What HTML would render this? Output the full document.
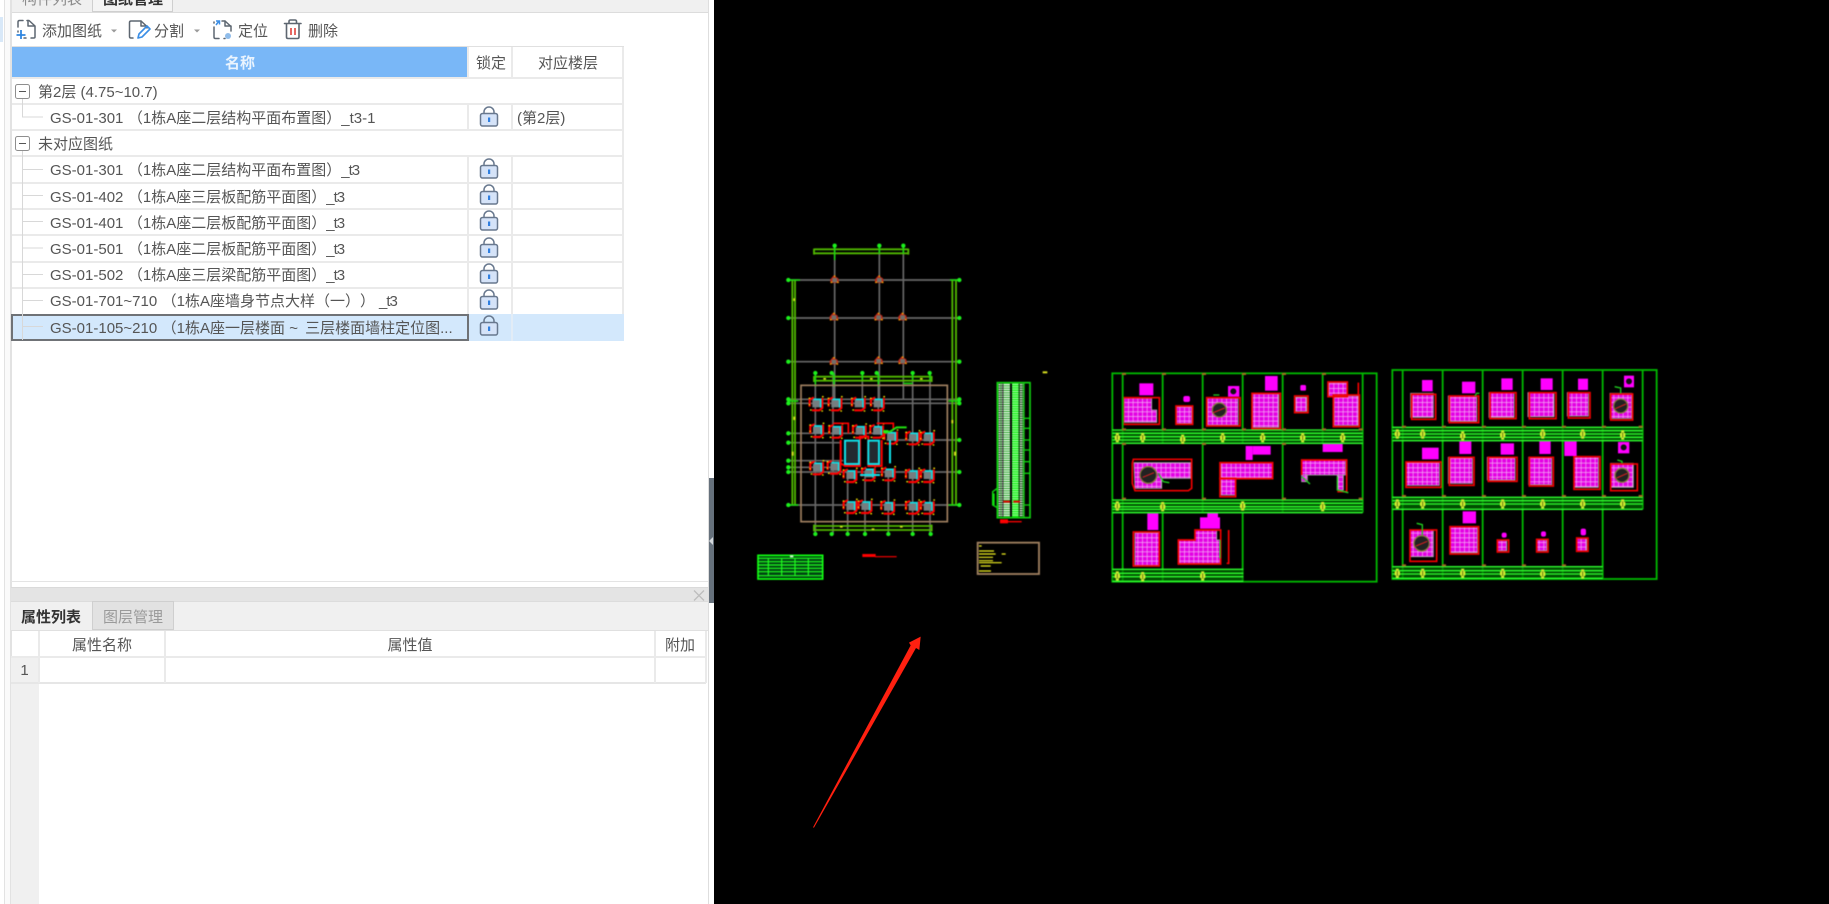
<!DOCTYPE html>
<html lang="zh"><head><meta charset="utf-8"><title>图纸管理</title>
<style>
html,body{margin:0;padding:0;width:1829px;height:904px;overflow:hidden;background:#fff}
body{position:relative;font-family:"Liberation Sans","Noto Sans CJK SC",sans-serif;font-size:15px;color:#555;text-spacing-trim:space-all}
.a{position:absolute}
.t{position:absolute;white-space:nowrap;line-height:20px;height:20px;filter:blur(.25px)}
.c{transform:translateX(-50%)}
.o{margin-left:4.5px}
.u{letter-spacing:-1px}
svg{position:absolute;left:0;top:0}
.r rect,.r path{fill:none;stroke:#f00000;stroke-width:5}
.p rect,.p path{fill:url(#gm);stroke:#b0a8b0;stroke-width:2.500}
.k rect{fill:#ff00ff}
</style></head><body>
<div class="a" style="left:0;top:17px;width:3px;height:25px;background:#d8e8f8"></div>
<div class="a" style="left:4px;top:0;width:1px;height:904px;background:#e2e2e2"></div>
<div class="a" style="left:5px;top:0;width:6px;height:904px;background:#fafafa"></div>
<div class="a" style="left:10px;top:0;width:2px;height:904px;background:#e2e2e2"></div>

<!-- top tabs -->
<div class="a" style="left:12px;top:0;width:697px;height:12px;background:#f0f0f0;border-bottom:1px solid #dcdcdc"></div>
<div class="a" style="left:92px;top:0;width:81px;height:12px;background:#f4f4f4;border:1px solid #cfcfcf;border-top:0;box-sizing:border-box"></div>
<div class="t" style="left:22px;top:-10px;color:#8c8c8c">构件列表</div>
<div class="t" style="left:103px;top:-10px;color:#333;font-weight:bold">图纸管理</div>

<!-- toolbar -->
<div class="t" style="left:42px;top:22px">添加图纸</div>
<div class="t" style="left:154px;top:22px">分割</div>
<div class="t" style="left:238px;top:22px">定位</div>
<div class="t" style="left:308px;top:22px">删除</div>

<!-- table lines -->
<div class="a" style="left:12px;top:46px;width:612px;height:1px;background:#e0e0e0"></div>
<div class="a" style="left:12px;top:47px;width:456px;height:31px;background:#79b7f7"></div>
<div class="a" style="left:467px;top:47px;width:2px;height:32px;background:#eaeaea"></div>
<div class="a" style="left:511px;top:47px;width:2px;height:32px;background:#eaeaea"></div>
<div class="a" style="left:622px;top:47px;width:2px;height:293px;background:#eaeaea"></div>
<div class="a" style="left:12px;top:77px;width:612px;height:2px;background:#eaeaea"></div>
<div class="a" style="left:12px;top:103px;width:612px;height:2px;background:#eaeaea"></div>
<div class="a" style="left:12px;top:129px;width:612px;height:2px;background:#eaeaea"></div>
<div class="a" style="left:12px;top:155px;width:612px;height:2px;background:#eaeaea"></div>
<div class="a" style="left:12px;top:182px;width:612px;height:2px;background:#eaeaea"></div>
<div class="a" style="left:12px;top:208px;width:612px;height:2px;background:#eaeaea"></div>
<div class="a" style="left:12px;top:234px;width:612px;height:2px;background:#eaeaea"></div>
<div class="a" style="left:12px;top:261px;width:612px;height:2px;background:#eaeaea"></div>
<div class="a" style="left:12px;top:287px;width:612px;height:2px;background:#eaeaea"></div>
<div class="a" style="left:467px;top:104px;width:2px;height:26px;background:#eaeaea"></div>
<div class="a" style="left:511px;top:104px;width:2px;height:26px;background:#eaeaea"></div>
<div class="a" style="left:467px;top:156px;width:2px;height:158px;background:#eaeaea"></div>
<div class="a" style="left:511px;top:156px;width:2px;height:158px;background:#eaeaea"></div>
<!-- selected -->
<div class="a" style="left:11px;top:314px;width:613px;height:27px;background:#d3e8fc"></div>
<div class="a" style="left:511px;top:314px;width:2px;height:27px;background:#e2ecf6"></div>
<div class="a" style="left:11px;top:314px;width:458px;height:27px;border:2px solid #6f7276;box-sizing:border-box"></div>

<!-- header text -->
<div class="t" style="left:225px;top:54px;color:#eaf4fe;font-weight:bold">名称</div>
<div class="t" style="left:476px;top:54px">锁定</div>
<div class="t" style="left:538px;top:54px">对应楼层</div>

<!-- rows -->
<div class="t" style="left:38px;top:83px">第2层 (4.75~10.7)</div>
<div class="t" style="left:50px;top:109px">GS-01-301<span class="o">（1栋A座二层结构平面布置图）</span>_t3-1</div>
<div class="t" style="left:517px;top:109px">(第2层)</div>
<div class="t" style="left:38px;top:135px">未对应图纸</div>
<div class="t" style="left:50px;top:161px">GS-01-301<span class="o">（1栋A座二层结构平面布置图）</span><span class="u">_t3</span></div>
<div class="t" style="left:50px;top:188px">GS-01-402<span class="o">（1栋A座三层板配筋平面图）</span><span class="u">_t3</span></div>
<div class="t" style="left:50px;top:214px">GS-01-401<span class="o">（1栋A座二层板配筋平面图）</span><span class="u">_t3</span></div>
<div class="t" style="left:50px;top:240px">GS-01-501<span class="o">（1栋A座二层板配筋平面图）</span><span class="u">_t3</span></div>
<div class="t" style="left:50px;top:266px">GS-01-502<span class="o">（1栋A座三层梁配筋平面图）</span><span class="u">_t3</span></div>
<div class="t" style="left:50px;top:292px">GS-01-701~710<span class="o">（1栋A座墙身节点大样（一））</span><span class="u" style="margin-left:4px">_t3</span></div>
<div class="t" style="left:50px;top:319px">GS-01-105~210<span class="o">（1栋A座一层楼面</span> ~ <span style="margin-left:3px">三层楼面墙柱定位图...</span></div>

<!-- lower panel -->
<div class="a" style="left:11px;top:581px;width:698px;height:1px;background:#e4e4e4"></div>
<div class="a" style="left:11px;top:587px;width:698px;height:14px;background:#e4e4e4;border-top:1px solid #dadada;box-sizing:border-box"></div>
<div class="a" style="left:11px;top:601px;width:698px;height:29px;background:#f0f0f0;border-top:1px solid #dcdcdc;box-sizing:border-box"></div>
<div class="a" style="left:92px;top:601px;width:82px;height:29px;background:#e2e2e2;border:1px solid #cfcfcf;box-sizing:border-box"></div>
<div class="a" style="left:11px;top:630px;width:698px;height:1px;background:#e0e0e0"></div>
<div class="t" style="left:21px;top:608px;color:#333;font-weight:bold">属性列表</div>
<div class="t" style="left:103px;top:608px;color:#9a9a9a">图层管理</div>
<div class="a" style="left:11px;top:656px;width:695px;height:2px;background:#eaeaea"></div>
<div class="a" style="left:11px;top:682px;width:695px;height:2px;background:#e6e6e6"></div>
<div class="a" style="left:11px;top:658px;width:28px;height:24px;background:#f0f0f0"></div>
<div class="a" style="left:11px;top:684px;width:28px;height:220px;background:#f0f0f0"></div>
<div class="a" style="left:38px;top:631px;width:2px;height:52px;background:#eaeaea"></div>
<div class="a" style="left:164px;top:631px;width:2px;height:52px;background:#eaeaea"></div>
<div class="a" style="left:654px;top:631px;width:2px;height:52px;background:#eaeaea"></div>
<div class="a" style="left:705px;top:631px;width:2px;height:52px;background:#eaeaea"></div>
<div class="t c" style="left:102px;top:636px">属性名称</div>
<div class="t c" style="left:410px;top:636px">属性值</div>
<div class="t c" style="left:680px;top:636px">附加</div>
<div class="t c" style="left:24.500px;top:661px">1</div>

<!-- panel right border + handle -->
<div class="a" style="left:708px;top:0;width:1px;height:904px;background:#dedede"></div>
<div class="a" style="left:709px;top:478px;width:5px;height:125px;background:#66717c"></div>
<div class="a" style="left:714px;top:0;width:1115px;height:904px;background:#000"></div>

<!-- UI icons -->
<svg width="714" height="360" viewBox="0 0 714 360" fill="none">
<defs>
<g id="lock">
<rect x="-8.500" y="-6.500" width="17" height="12.500" rx="2" fill="#d5e3f8" stroke="#68788e" stroke-width="1.500"/>
<path d="M-5-6.500V-8a5 5 0 0 1 10 0v1.500" stroke="#68788e" stroke-width="1.500"/>
<rect x="-1" y="-2.500" width="2.200" height="4.500" fill="#2f7fe0"/>
</g>
</defs>
<!-- locks -->
<use href="#lock" x="489" y="120"/><use href="#lock" x="489" y="172"/><use href="#lock" x="489" y="198"/>
<use href="#lock" x="489" y="224"/><use href="#lock" x="489" y="251"/><use href="#lock" x="489" y="277"/>
<use href="#lock" x="489" y="303"/><use href="#lock" x="489" y="329"/>
<!-- tree -->
<g stroke="#d8d8d8" stroke-width="1">
<path d="M22.500 99V117H43"/>
<path d="M22.500 151V169.500H43M22.500 157V340M22.500 195.500H43M22.500 221.500H43M22.500 248H43M22.500 274.500H43M22.500 300.500H43M22.500 326.500H43"/>
</g>
<rect x="15.500" y="84.500" width="14" height="14" rx="2" fill="#fff" stroke="#8e8e8e"/>
<path d="M19 91.500H26" stroke="#555"/>
<rect x="15.500" y="136.500" width="14" height="14" rx="2" fill="#fff" stroke="#8e8e8e"/>
<path d="M19 143.500H26" stroke="#555"/>
<!-- carets -->
<path d="M111 29.500h6l-3 3z" fill="#9a9a9a"/><path d="M194 29.500h6l-3 3z" fill="#9a9a9a"/>
<!-- add -->
<g stroke="#5d6670" stroke-width="1.500" stroke-linecap="round" stroke-linejoin="round">
<path d="M18 27V22q0-1.500 1.500-1.500H23M27 20.500h2L35 26V37q0 1-1.500 1H31M26 38h-2M18 31v1"/>
<path d="M28 21v5h6"/>
</g>
<path d="M21 30v9M16.500 35H25.500" stroke="#2f86e0" stroke-width="1.800"/>
<!-- split -->
<g stroke="#5d6670" stroke-width="1.500" stroke-linecap="round" stroke-linejoin="round">
<path d="M133 38h-2q-1.500 0-1.500-1.500v-14q0-1.500 1.500-1.500h10l6 5.500V28"/><path d="M141 21v5h6"/>
</g>
<path d="M138 38l1-4 8-8 3 3-8 8z" stroke="#3a8ee6" stroke-width="1.600" stroke-linejoin="round"/>
<!-- locate -->
<g stroke="#5d6670" stroke-width="1.500" stroke-linecap="round" stroke-linejoin="round">
<path d="M214 27v10q0 1.500 1.500 1.500H219M224 38.500h1M222 21h3l6 5.500V31"/><path d="M225 21v5h6"/><path d="M214 22v1"/>
</g>
<path d="M216 25l3-4M216 21h3.500v3.500" stroke="#3a8ee6" stroke-width="1.500"/>
<circle cx="228" cy="36" r="3" fill="#8fbcea"/>
<!-- delete -->
<g stroke="#5d6670" stroke-width="1.600" stroke-linecap="round" stroke-linejoin="round">
<path d="M284.500 23.500H301M289 23.500v-2q0-1.500 1.500-1.500h4.500q1.500 0 1.500 1.500v2"/>
<path d="M286.500 24v13q0 1.500 1.500 1.500h9.500q1.500 0 1.500-1.500V24"/>
</g>
<path d="M291 28v7M295 28v7" stroke="#e0423c" stroke-width="1.600"/>
</svg>
<svg width="714" height="904" viewBox="0 0 714 904" fill="none" style="pointer-events:none">
<path d="M694 590.500l10 10M704 590.500l-10 10" stroke="#bdbdbd" stroke-width="1.300"/>
<path d="M713 537l-4 4 4 4z" fill="#d4d8dc"/>
</svg>

<!-- CAD canvas -->
<svg width="1829" height="904" viewBox="0 0 1829 904" fill="none" style="filter:blur(.5px)">
<defs>
<pattern id="gm" width="14" height="14" patternUnits="userSpaceOnUse">
<rect width="14" height="14" fill="#e400e4"/>
<path d="M0 1.500H14M1.500 0V14" stroke="#f4b4f4" stroke-width="2"/>
</pattern>
<pattern id="st1" width="8" height="7" patternUnits="userSpaceOnUse">
<rect width="8" height="7" fill="#1a1a1a"/><rect width="8" height="4" fill="#f0f0f0"/><rect x="6" width="2" height="7" fill="#0a0"/>
</pattern>
<pattern id="st2" width="8" height="7" patternUnits="userSpaceOnUse">
<rect width="8" height="7" fill="#149814"/><rect width="8" height="4" fill="#f4fff4"/>
</pattern>
<pattern id="st3" width="8" height="7" patternUnits="userSpaceOnUse">
<rect width="8" height="7" fill="#10f010"/><rect width="8" height="2.500" fill="#d0ffd0"/>
</pattern>
<g id="c1">
<path d="M-13 9V-2L-3-14 11-5 13 9Z" fill="#c02818"/>
<rect x="-7" y="-6" width="14" height="13" fill="#70706a"/>
<path d="M-12 8l5-2M0-14v5M12 8l-5-2" stroke="#f0a800" stroke-width="4"/>
</g>
<g id="c2">
<path d="M-19 10V-12L-6-17M19-16V14L10 21H-12" fill="none" stroke="#ff0000" stroke-width="6.500"/>
<rect x="-11" y="-10" width="23" height="22" fill="#767e80"/>
<path d="M-8-12H14V13" stroke="#10e0e8" stroke-width="5"/>
<path d="M-22-15h5M18-20h5M-18 20h5M16 23h5M-22 4h4" stroke="#f8e800" stroke-width="4"/>
</g>
<g id="lab">
<rect x="-4.500" y="-14" width="9" height="28" fill="#d0f030"/>
<rect x="-8" y="-6" width="16" height="12" fill="#d8f030"/>
<rect x="-1.500" y="-8" width="3" height="16" fill="#607818"/>
</g>
<g id="t"><rect x="-6" y="-3" width="12" height="6" fill="#a06a20"/></g>
</defs>

<!-- floor plan -->
<g transform="translate(740 230) scale(.33333)">
<g stroke="#686868" stroke-width="5">
<path d="M145 150H658M145 264H658M145 395H658M145 508H658M145 520H658M145 610H440M145 638H300M440 630H658M145 692H310M145 712H300M145 726H658M145 825H658"/>
<path d="M284 47V508M418 47V508M490 47V508M226 430V912M279 430V912M518 430V912M570 430V912M415 430V600M323 730V912M375 730V912M445 730V912M367 430V510"/>
</g>
<g stroke="#50b800" stroke-width="5.500">
<path d="M157 150V825M165 150V825M637 150V825M648 150V825"/>
<path d="M222 58H505M222 70H505M222 56V74M505 56V74M222 440H575M222 452H575M222 888H575M222 900H575M222 438V456M575 438V456M222 884V904M575 884V904"/>
</g>
<g stroke="#18d810" stroke-width="4.500">
<path d="M284 47V90M418 47V70M490 47V70M226 430V470M282 430V470M367 430V450M415 430V470M518 430V450M570 430V450"/>
<path d="M145 150H180M630 150H658M145 513H175M625 513H658M145 825H175M625 825H658M490 460H518"/>
</g>
<rect x="183" y="466" width="439" height="409" stroke="#a08060" stroke-width="5"/>
<use href="#c1" x="284" y="150"/><use href="#c1" x="418" y="150"/>
<use href="#c1" x="282" y="262"/><use href="#c1" x="416" y="262"/><use href="#c1" x="488" y="262"/>
<use href="#c1" x="282" y="395"/><use href="#c1" x="416" y="393"/><use href="#c1" x="488" y="393"/>
<use href="#c2" x="228" y="520"/><use href="#c2" x="285" y="520"/><use href="#c2" x="355" y="520"/><use href="#c2" x="412" y="520"/>
<use href="#c2" x="230" y="600"/><use href="#c2" x="287" y="602"/><use href="#c2" x="358" y="602"/><use href="#c2" x="410" y="602"/>
<use href="#c2" x="230" y="712"/><use href="#c2" x="282" y="710"/>
<use href="#c2" x="330" y="735"/><use href="#c2" x="385" y="730"/><use href="#c2" x="445" y="730"/><use href="#c2" x="517" y="735"/><use href="#c2" x="562" y="735"/>
<use href="#c2" x="330" y="828"/><use href="#c2" x="375" y="828"/><use href="#c2" x="443" y="830"/><use href="#c2" x="517" y="830"/><use href="#c2" x="562" y="830"/>
<use href="#c2" x="452" y="620"/><use href="#c2" x="518" y="622"/><use href="#c2" x="562" y="622"/>
<path d="M302 630V700L315 708H360V620H385V708H425V630" stroke="#ff0000" stroke-width="6"/>
<path d="M280 580H325V610M410 580H460V600" stroke="#ff0000" stroke-width="5"/>
<rect x="315" y="632" width="42" height="70" fill="#222a30" stroke="#10e0e8" stroke-width="6"/>
<rect x="385" y="632" width="32" height="70" fill="#222a30" stroke="#10e0e8" stroke-width="6"/>
<path d="M450 630V700M360 735H420" stroke="#10e0e8" stroke-width="6"/>
<path d="M430 605H450L470 592H500" stroke="#20e010" stroke-width="6"/><rect x="430" y="600" width="14" height="10" fill="#20f010"/>
<g fill="#1cf01c">
<circle cx="284" cy="47" r="6.500"/><circle cx="418" cy="47" r="6.500"/><circle cx="490" cy="47" r="6.500"/>
<circle cx="145" cy="150" r="6.500"/><circle cx="145" cy="264" r="6.500"/><circle cx="145" cy="395" r="6.500"/><circle cx="145" cy="508" r="6.500"/><circle cx="145" cy="520" r="6.500"/><circle cx="145" cy="610" r="6.500"/><circle cx="145" cy="638" r="6.500"/><circle cx="145" cy="692" r="6.500"/><circle cx="145" cy="712" r="6.500"/><circle cx="145" cy="726" r="6.500"/><circle cx="145" cy="825" r="6.500"/>
<circle cx="658" cy="150" r="6.500"/><circle cx="658" cy="264" r="6.500"/><circle cx="658" cy="395" r="6.500"/><circle cx="658" cy="508" r="6.500"/><circle cx="658" cy="520" r="6.500"/><circle cx="658" cy="630" r="6.500"/><circle cx="658" cy="726" r="6.500"/><circle cx="658" cy="825" r="6.500"/>
<circle cx="226" cy="429" r="6.500"/><circle cx="275" cy="429" r="6.500"/><circle cx="367" cy="429" r="6.500"/><circle cx="410" cy="429" r="6.500"/><circle cx="518" cy="429" r="6.500"/><circle cx="569" cy="429" r="6.500"/>
<circle cx="226" cy="912" r="6.500"/><circle cx="275" cy="912" r="6.500"/><circle cx="323" cy="912" r="6.500"/><circle cx="375" cy="912" r="6.500"/><circle cx="445" cy="912" r="6.500"/><circle cx="518" cy="912" r="6.500"/><circle cx="572" cy="912" r="6.500"/>
</g>
<g fill="#d8e020"><rect x="160" y="205" width="5" height="8"/><rect x="160" y="560" width="6" height="10"/><rect x="155" y="665" width="6" height="12"/><rect x="634" y="570" width="6" height="10"/><rect x="642" y="665" width="6" height="12"/><rect x="250" y="444" width="8" height="5"/><rect x="390" y="444" width="8" height="5"/><rect x="540" y="444" width="8" height="5"/><rect x="300" y="888" width="8" height="5"/><rect x="395" y="895" width="8" height="5"/><rect x="480" y="888" width="8" height="5"/><rect x="908" y="424" width="14" height="6"/></g>
<!-- schedule -->
<rect x="772" y="458" width="16" height="404" fill="url(#st1)"/>
<rect x="790" y="458" width="20" height="404" fill="url(#st2)"/>
<rect x="816" y="458" width="20" height="404" fill="url(#st3)"/>
<rect x="838" y="458" width="12" height="404" fill="url(#st1)"/>
<rect x="772" y="458" width="98" height="405" stroke="#10d010" stroke-width="5"/>
<path d="M852 458V862M852 565H870M852 595H870M852 630H870M852 660H870M852 695H870M852 730H870M852 825H870" stroke="#10d010" stroke-width="4"/>
<path d="M772 775L758 785V825L772 833M762 790V825" stroke="#10e010" stroke-width="4"/>
<rect x="780" y="868" width="24" height="12" fill="#ff0000"/><path d="M804 875H845" stroke="#ff0000" stroke-width="4"/>
<path d="M790 815h20M820 815l20 0" stroke="#e00000" stroke-width="6"/>
<!-- bottom table -->
<rect x="54" y="976" width="194" height="71" fill="#041" stroke="#10ff10" stroke-width="5"/>
<path d="M54 985H248M54 995H248M54 1005H248M54 1015H248M54 1025H248M54 1037H248M85 985V1037M125 985V1037M165 985V1037M205 985V1037" stroke="#20ff20" stroke-width="3.500"/>
<rect x="150" y="976" width="10" height="6" fill="#d8f8d8"/>
<rect x="367" y="972" width="40" height="9" fill="#ff0000"/><path d="M405 980H470" stroke="#ff0000" stroke-width="3.500"/>
<!-- legend -->
<rect x="713" y="938" width="184" height="94" stroke="#a08060" stroke-width="5.500"/>
<g stroke="#f0f020" stroke-width="3.500"><path d="M717 948h8M717 963h45M717 972h50M785 972h12M717 982h42M717 992h42M717 998h68M722 1008h30M717 1023h36"/></g>
</g>

<!-- sheet 1 -->
<g transform="translate(1100 360) scale(.33333)">
<g class="p">
<path d="M72 115H155V150H170V187H72Z"/><rect x="230" y="140" width="45" height="50"/><rect x="322" y="115" width="92" height="80"/><rect x="458" y="102" width="78" height="100"/><rect x="586" y="112" width="34" height="42"/><rect x="686" y="68" width="54" height="40"/><rect x="703" y="108" width="72" height="88"/>
<path d="M102 308H272V355H185V385H105Z"/><rect x="362" y="310" width="156" height="45"/><rect x="362" y="355" width="44" height="50"/><rect x="606" y="300" width="130" height="45"/><rect x="712" y="345" width="18" height="45"/><rect x="605" y="345" width="17" height="20"/>
<rect x="105" y="518" width="72" height="98"/><path d="M235 540H285V510H350V540H360V610H235Z"/>
</g>
<g class="r">
<rect x="70" y="113" width="108" height="80"/><rect x="228" y="138" width="50" height="55"/><rect x="320" y="113" width="100" height="85"/><rect x="456" y="100" width="85" height="106"/><rect x="584" y="108" width="40" height="50"/><rect x="700" y="105" width="78" height="95"/><rect x="684" y="66" width="58" height="44"/>
<path d="M100 298H275V385L265 392H105L97 370V310Z"/><rect x="360" y="308" width="158" height="48"/><rect x="360" y="355" width="47" height="55"/><path d="M605 345V300H740V395H712"/>
<rect x="100" y="516" width="78" height="102"/><path d="M235 612V540H285V510H362V612Z"/>
<path d="M178 115V190M386 510V610H380M775 68V105" />
</g>
<g class="k">
<rect x="118" y="70" width="42" height="36"/><rect x="250" y="108" width="20" height="18" rx="6"/>
<rect x="384" y="78" width="34" height="32"/><rect x="495" y="48" width="38" height="44"/>
<rect x="601" y="75" width="17" height="17" rx="4"/>
<rect x="437" y="258" width="21" height="42"/><rect x="458" y="258" width="54" height="26"/><rect x="668" y="252" width="60" height="24"/>
<rect x="142" y="460" width="33" height="50"/><rect x="300" y="472" width="60" height="34"/><rect x="322" y="458" width="32" height="16"/>
</g>
<circle cx="400" cy="94" r="9" fill="#111"/>
<circle cx="358" cy="150" r="21" fill="#222" stroke="#8a7a40" stroke-width="4"/>
<circle cx="145" cy="345" r="25" fill="#222" stroke="#8a7a40" stroke-width="4"/>
<path d="M340 158l34-14M128 352l34-14" stroke="#e02020" stroke-width="3"/>
<path d="M605 350L630 372M712 350V390L745 398M175 340L190 365L208 368M360 540V595M340 105H358" stroke="#20d020" stroke-width="4"/>
<g stroke="#00b800" stroke-width="5.500">
<rect x="37" y="40" width="793" height="625"/>
<path d="M68 40V665M188 40V250M308 40V458M428 40V250M548 40V458M668 40V250M788 40V458M188 458V665M428 458V665"/>
</g>
<rect x="37" y="212" width="751" height="36" fill="#007000" opacity=".7"/>
<rect x="37" y="422" width="751" height="34" fill="#007000" opacity=".7"/>
<rect x="37" y="630" width="393" height="34" fill="#007000" opacity=".7"/>
<g stroke="#30ff30" stroke-width="4">
<path d="M37 210H788M37 220H788M37 230H788M37 240H788M37 250H788"/>
<path d="M37 420H788M37 430H788M37 440H788M37 448H788M37 458H788"/>
<path d="M37 628H430M37 640H430M37 650H430M37 664H430"/>
</g>
<use href="#lab" x="128" y="233"/><use href="#lab" x="248" y="238"/><use href="#lab" x="368" y="233"/><use href="#lab" x="488" y="233"/><use href="#lab" x="608" y="233"/><use href="#lab" x="728" y="233"/>
<use href="#lab" x="188" y="440"/><use href="#lab" x="428" y="438"/><use href="#lab" x="668" y="440"/>
<use href="#lab" x="128" y="650"/><use href="#lab" x="308" y="648"/><use href="#lab" x="52" y="233"/><use href="#lab" x="52" y="438"/><use href="#lab" x="52" y="648"/>
<g><use href="#t" x="72" y="42"/><use href="#t" x="192" y="42"/><use href="#t" x="312" y="42"/><use href="#t" x="432" y="42"/><use href="#t" x="552" y="42"/><use href="#t" x="672" y="42"/><use href="#t" x="72" y="208"/><use href="#t" x="192" y="208"/><use href="#t" x="312" y="208"/><use href="#t" x="432" y="208"/><use href="#t" x="552" y="208"/><use href="#t" x="672" y="208"/><use href="#t" x="782" y="208"/><use href="#t" x="72" y="252"/><use href="#t" x="312" y="252"/><use href="#t" x="552" y="252"/><use href="#t" x="72" y="416"/><use href="#t" x="312" y="416"/><use href="#t" x="552" y="416"/><use href="#t" x="782" y="416"/></g>
</g>

<!-- sheet 2 -->
<g transform="translate(1380 360) scale(.33333)">
<g class="p">
<rect x="92" y="100" width="68" height="72"/><rect x="205" y="108" width="85" height="76"/><rect x="327" y="98" width="75" height="74"/><rect x="444" y="98" width="78" height="72"/><rect x="562" y="98" width="63" height="70"/><rect x="690" y="100" width="65" height="75"/>
<rect x="78" y="306" width="100" height="70"/><rect x="205" y="292" width="72" height="78"/><rect x="322" y="292" width="83" height="68"/><rect x="446" y="292" width="69" height="82"/><rect x="582" y="290" width="73" height="92"/><rect x="692" y="310" width="68" height="72"/>
<rect x="90" y="510" width="70" height="80"/><rect x="210" y="500" width="82" height="78"/><rect x="352" y="542" width="28" height="30"/><rect x="470" y="540" width="30" height="32"/><rect x="590" y="536" width="30" height="36"/>
</g>
<g class="r">
<rect x="95" y="103" width="72" height="75"/><rect x="208" y="108" width="88" height="80"/><rect x="330" y="98" width="78" height="78"/><rect x="448" y="98" width="80" height="78"/><rect x="565" y="98" width="65" height="76"/><rect x="692" y="102" width="66" height="78"/>
<rect x="78" y="306" width="106" height="76"/><rect x="208" y="292" width="74" height="84"/><rect x="325" y="292" width="86" height="72"/><rect x="448" y="292" width="72" height="86"/><rect x="582" y="290" width="78" height="98"/><rect x="692" y="312" width="80" height="80"/>
<rect x="90" y="510" width="80" height="94"/><rect x="210" y="500" width="86" height="82"/><rect x="352" y="540" width="34" height="36"/><rect x="470" y="538" width="34" height="38"/><rect x="590" y="534" width="34" height="40"/>
</g>
<g class="k">
<rect x="126" y="60" width="32" height="34"/><rect x="246" y="65" width="40" height="35"/><rect x="364" y="55" width="34" height="35"/><rect x="482" y="55" width="36" height="35"/><rect x="594" y="56" width="30" height="34"/><rect x="732" y="47" width="30" height="35"/>
<rect x="126" y="263" width="50" height="35"/><rect x="238" y="244" width="36" height="38"/><rect x="362" y="250" width="40" height="34"/><rect x="478" y="242" width="34" height="40"/><rect x="553" y="244" width="37" height="44"/><rect x="714" y="246" width="34" height="34"/>
<rect x="248" y="454" width="40" height="36"/><rect x="365" y="518" width="15" height="15" rx="6"/><rect x="483" y="514" width="15" height="16" rx="6"/><rect x="602" y="506" width="16" height="20" rx="6"/>
</g>
<circle cx="747" cy="64" r="9" fill="#111"/><circle cx="731" cy="262" r="9" fill="#111"/>
<circle cx="722" cy="138" r="21" fill="#222" stroke="#8a7a40" stroke-width="4"/>
<circle cx="726" cy="346" r="21" fill="#222" stroke="#8a7a40" stroke-width="4"/>
<circle cx="125" cy="550" r="23" fill="#222" stroke="#8a7a40" stroke-width="4"/>
<path d="M706 146l32-14M710 354l32-14M108 558l34-14" stroke="#e02020" stroke-width="3"/>
<path d="M722 100V84L704 80M726 310V304L712 300M127 525V494L110 490" stroke="#20d020" stroke-width="4"/>
<path d="M285 108L290 100H298" stroke="#20d020" stroke-width="4"/>
<g stroke="#00b800" stroke-width="5.500">
<rect x="37" y="30" width="793" height="627"/>
<path d="M68 30V657M188 30V657M308 30V657M428 30V657M548 30V657M668 30V657M788 30V448"/>
</g>
<rect x="37" y="204" width="751" height="36" fill="#007000" opacity=".7"/>
<rect x="37" y="414" width="751" height="32" fill="#007000" opacity=".7"/>
<rect x="37" y="622" width="631" height="32" fill="#007000" opacity=".7"/>
<g stroke="#30ff30" stroke-width="4">
<path d="M37 202H788M37 212H788M37 222H788M37 232H788M37 242H788"/>
<path d="M37 412H788M37 422H788M37 432H788M37 448H788"/>
<path d="M37 620H668M37 632H668M37 642H668M37 655H668"/>
</g>
<use href="#lab" x="128" y="222"/><use href="#lab" x="248" y="228"/><use href="#lab" x="368" y="225"/><use href="#lab" x="488" y="222"/><use href="#lab" x="608" y="222"/><use href="#lab" x="728" y="225"/>
<use href="#lab" x="128" y="432"/><use href="#lab" x="248" y="432"/><use href="#lab" x="368" y="432"/><use href="#lab" x="488" y="432"/><use href="#lab" x="608" y="432"/><use href="#lab" x="728" y="432"/>
<use href="#lab" x="128" y="640"/><use href="#lab" x="248" y="640"/><use href="#lab" x="368" y="640"/><use href="#lab" x="488" y="642"/><use href="#lab" x="608" y="642"/><use href="#lab" x="52" y="222"/><use href="#lab" x="52" y="432"/><use href="#lab" x="52" y="640"/>
<g><use href="#t" x="72" y="200"/><use href="#t" x="192" y="200"/><use href="#t" x="312" y="200"/><use href="#t" x="432" y="200"/><use href="#t" x="552" y="200"/><use href="#t" x="672" y="200"/><use href="#t" x="782" y="200"/><use href="#t" x="72" y="408"/><use href="#t" x="192" y="408"/><use href="#t" x="312" y="408"/><use href="#t" x="432" y="408"/><use href="#t" x="552" y="408"/><use href="#t" x="672" y="408"/><use href="#t" x="782" y="408"/><use href="#t" x="72" y="616"/><use href="#t" x="192" y="616"/><use href="#t" x="312" y="616"/><use href="#t" x="432" y="616"/><use href="#t" x="552" y="616"/></g>
</g>
</svg>

<!-- red arrow -->
<svg width="1829" height="904" viewBox="0 0 1829 904" fill="none">
<g transform="translate(780 620) scale(.33333)">
<polygon points="99,622 392,76 387,68 422,50 418,90 408,84 102,623" fill="#ff2010"/>
</g>
</svg>
</body></html>
